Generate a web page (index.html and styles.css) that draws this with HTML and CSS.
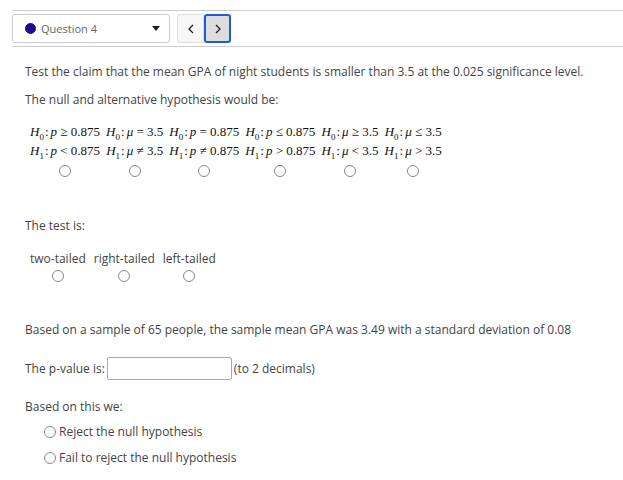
FILE: index.html
```html
<!DOCTYPE html>
<html lang="en">

<head>
    <meta charset="UTF-8">
    <title>Question 4</title>
    <link rel="stylesheet" href="styles.css">
</head>

<body>
    <div class="nav-bar">
        <div class="q-select">
            <span class="dot"></span>
            <span class="q-label">Question 4</span>
            <span class="caret"></span>
        </div>
        <div class="pager">
            <button class="pg-btn"><svg width="8" height="10" viewBox="0 0 8 10"><path d="M6 1L2 5l4 4" fill="none" stroke="#222" stroke-width="1.3"/></svg></button>
            <button class="pg-btn active"><svg width="8" height="10" viewBox="0 0 8 10"><path d="M2 1l4 4-4 4" fill="none" stroke="#222" stroke-width="1.3"/></svg></button>
        </div>
    </div>

    <main class="question">
        <p class="first">Test the claim that the mean GPA of night students is smaller than 3.5 at the 0.025 significance level.</p>
        <p class="second">The null and alternative hypothesis would be:</p>

        <table class="hyp">
            <tr>
                <td><i>H</i><sub>0</sub><b>:</b><i>p</i> &ge; 0.875<br><i>H</i><sub>1</sub><b>:</b><i>p</i> &lt; 0.875<br><span class="radio"></span></td>
                <td><i>H</i><sub>0</sub><b>:</b><i>&mu;</i> = 3.5<br><i>H</i><sub>1</sub><b>:</b><i>&mu;</i> &ne; 3.5<br><span class="radio"></span></td>
                <td><i>H</i><sub>0</sub><b>:</b><i>p</i> = 0.875<br><i>H</i><sub>1</sub><b>:</b><i>p</i> &ne; 0.875<br><span class="radio"></span></td>
                <td><i>H</i><sub>0</sub><b>:</b><i>p</i> &le; 0.875<br><i>H</i><sub>1</sub><b>:</b><i>p</i> &gt; 0.875<br><span class="radio"></span></td>
                <td><i>H</i><sub>0</sub><b>:</b><i>&mu;</i> &ge; 3.5<br><i>H</i><sub>1</sub><b>:</b><i>&mu;</i> &lt; 3.5<br><span class="radio"></span></td>
                <td><i>H</i><sub>0</sub><b>:</b><i>&mu;</i> &le; 3.5<br><i>H</i><sub>1</sub><b>:</b><i>&mu;</i> &gt; 3.5<br><span class="radio"></span></td>
            </tr>
        </table>

        <p class="test-is">The test is:</p>

        <table class="tails">
            <tr>
                <td>two-tailed<br><span class="radio"></span></td>
                <td>right-tailed<br><span class="radio"></span></td>
                <td>left-tailed<br><span class="radio"></span></td>
            </tr>
        </table>

        <p class="sample">Based on a sample of 65 people, the sample mean GPA was 3.49 with a standard deviation of 0.08</p>

        <p class="pval">The p-value is: <span class="answer"></span> (to 2 decimals)</p>

        <p class="based">Based on this we:</p>
        <div class="choices">
            <label><span class="radio"></span>Reject the null hypothesis</label>
            <label><span class="radio"></span>Fail to reject the null hypothesis</label>
        </div>
    </main>
</body>

</html>
```

FILE: styles.css
```css
body {
    margin: 0;
    font-family: "Open Sans", sans-serif;
    font-size: 12px;
    color: #444;
    background-color: #fff;
}

.nav-bar {
    display: flex;
    align-items: center;
    gap: 7px;
    margin: 10px 0 0 12px;
    padding: 3px 0;
    border-top: 1px solid #ccc;
    border-bottom: 1px solid #ccc;
}

.q-select {
    display: flex;
    align-items: center;
    width: 156px;
    height: 27px;
    border: 1px solid #ccc;
    border-radius: 3px;
}

.dot {
    width: 9px;
    height: 9px;
    margin-left: 12px;
    border-radius: 50%;
    background-color: #1a0a9a;
    border: 1px solid #222;
}

.q-label {
    margin-left: 5px;
    color: #666;
    font-size: 11px;
    flex: 1;
}

.caret {
    width: 0;
    height: 0;
    margin-right: 9px;
    border-left: 4px solid transparent;
    border-right: 4px solid transparent;
    border-top: 5px solid #222;
}

.pager {
    display: flex;
}

.pg-btn {
    display: flex;
    align-items: center;
    justify-content: center;
    width: 27px;
    height: 29px;
    padding: 0;
    border: 1px solid #ddd;
    background-color: #f7f7f7;
}

.pg-btn:first-child {
    border-radius: 3px 0 0 3px;
}

.pg-btn.active {
    border: 2px solid #1a5fd0;
    border-radius: 3px;
    background-color: #ddd;
}

.question {
    padding: 0 25px;
}

.question p {
    margin: 0;
    line-height: 15px;
}

.question .first {
    padding-top: 17px;
}

.question .second {
    padding-top: 13px;
}

.hyp {
    border-collapse: collapse;
    margin: 15px 0 0 2px;
    font-family: "Liberation Serif", serif;
    font-size: 13px;
    color: #111;
    line-height: 19px;
}

.hyp td {
    padding: 0 3px;
    text-align: center;
    white-space: nowrap;
}

.hyp sub {
    font-size: 9px;
    line-height: 0;
}

.hyp b {
    font-weight: normal;
    margin: 0 2px 0 1px;
}

.radio {
    display: inline-block;
    width: 10px;
    height: 10px;
    border: 1px solid #888;
    border-radius: 50%;
    background-color: #fff;
    vertical-align: middle;
}

.question .test-is {
    padding-top: 39px;
}

.tails {
    border-collapse: collapse;
    margin: 18px 0 0 1px;
    line-height: 16px;
}

.tails td {
    padding: 0 4px;
    text-align: center;
}

.question .sample {
    padding-top: 39px;
}

.question .pval {
    display: flex;
    align-items: center;
    gap: 2px;
    padding-top: 20px;
}

.answer {
    display: inline-block;
    width: 123px;
    height: 21px;
    border: 1px solid #aaa;
    border-radius: 2px;
}

.question .based {
    padding-top: 19px;
}

.choices {
    display: flex;
    flex-direction: column;
    gap: 9px;
    padding: 9px 0 0 19px;
}

.choices label {
    display: flex;
    align-items: center;
    gap: 3px;
}
```
